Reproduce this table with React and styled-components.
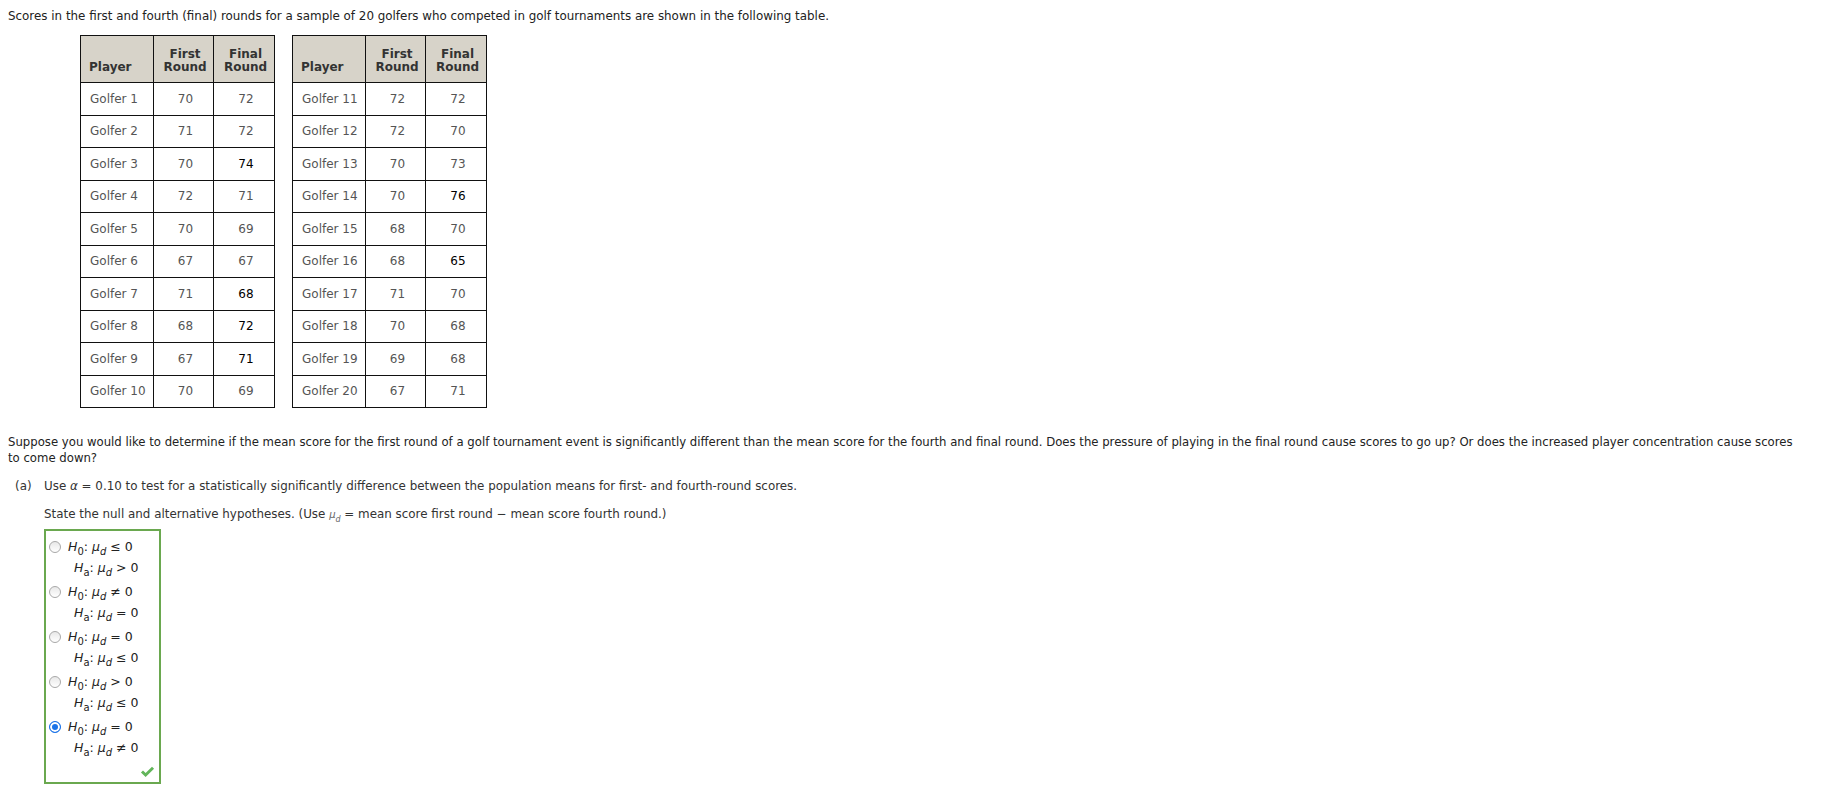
import React from 'react';
import styled, { createGlobalStyle } from 'styled-components';

const GlobalStyle = createGlobalStyle`
  body {
    margin: 0;
    background: #fff;
    font-family: "DejaVu Sans", Verdana, sans-serif;
    font-size: 11.9px;
    color: #222;
  }
`;

const leftRows = [
  ['Golfer 1', 70, 72],
  ['Golfer 2', 71, 72],
  ['Golfer 3', 70, 74, true],
  ['Golfer 4', 72, 71],
  ['Golfer 5', 70, 69],
  ['Golfer 6', 67, 67],
  ['Golfer 7', 71, 68, true],
  ['Golfer 8', 68, 72, true],
  ['Golfer 9', 67, 71, true],
  ['Golfer 10', 70, 69],
];

const rightRows = [
  ['Golfer 11', 72, 72],
  ['Golfer 12', 72, 70],
  ['Golfer 13', 70, 73],
  ['Golfer 14', 70, 76, true],
  ['Golfer 15', 68, 70],
  ['Golfer 16', 68, 65, true],
  ['Golfer 17', 71, 70],
  ['Golfer 18', 70, 68],
  ['Golfer 19', 69, 68],
  ['Golfer 20', 67, 71],
];

const options = [
  ['≤ 0', '> 0'],
  ['≠ 0', '= 0'],
  ['= 0', '≤ 0'],
  ['> 0', '≤ 0'],
  ['= 0', '≠ 0'],
];

function ScoreTable({ rows }) {
  return (
    <Table>
      <colgroup>
        <col style={{ width: 73 }} />
        <col style={{ width: 60 }} />
        <col style={{ width: 61 }} />
      </colgroup>
      <thead>
        <tr>
          <Th align="left">Player</Th>
          <Th>First<br />Round</Th>
          <Th>Final<br />Round</Th>
        </tr>
      </thead>
      <tbody>
        {rows.map(([name, first, final, dark]) => (
          <tr key={name}>
            <Td align="left">{name}</Td>
            <Td>{first}</Td>
            <Td $dark={dark}>{final}</Td>
          </tr>
        ))}
      </tbody>
    </Table>
  );
}

function Hyp({ sub, rel }) {
  return (
    <HypLine $indent={sub === 'a'}>
      <Ital>H</Ital><Sub>{sub}</Sub>: <Ital>μ</Ital><Sub $italic>d</Sub> {rel}
    </HypLine>
  );
}

export default function App() {
  return (
    <Page>
      <GlobalStyle />
      <Text>
        Scores in the first and fourth (final) rounds for a sample of 20 golfers who competed in golf tournaments are shown in the following table.
      </Text>

      <Tables>
        <ScoreTable rows={leftRows} />
        <ScoreTable rows={rightRows} />
      </Tables>

      <Question>
        Suppose you would like to determine if the mean score for the first round of a golf tournament event is significantly different than the mean score for the fourth and final round. Does the pressure of playing in the final round cause scores to go up? Or does the increased player concentration cause scores to come down?
      </Question>

      <Part>
        <PartLabel>(a)</PartLabel>
        <PartBody>
          <Text>
            Use <Ital>α</Ital> = 0.10 to test for a statistically significantly difference between the population means for first- and fourth-round scores.
          </Text>
          <Prompt>
            State the null and alternative hypotheses. (Use <SmallMu>μ<Sub $italic>d</Sub></SmallMu> = mean score first round − mean score fourth round.)
          </Prompt>

          <AnswerBox>
            {options.map(([h0, ha], i) => (
              <Option key={i}>
                <Radio $checked={i === 4} />
                <div>
                  <Hyp sub="0" rel={h0} />
                  <Hyp sub="a" rel={ha} />
                </div>
              </Option>
            ))}
            <Check viewBox="0 0 16 12">
              <path d="M1 6.5 L3.2 4.3 L6 7 L12.8 0.4 L15 2.6 L6 11.4 Z" fill="#62b55a" />
            </Check>
          </AnswerBox>
        </PartBody>
      </Part>
    </Page>
  );
}

const Page = styled.div`
  padding: 8px;
`;

const Text = styled.p`
  margin: 0;
  line-height: 16px;
`;

const Tables = styled.div`
  display: flex;
  gap: 17px;
  margin: 11px 0 0 72px;
`;

const Table = styled.table`
  border-collapse: collapse;
  table-layout: fixed;
  border: 1.5px solid #111;
  font-size: 12px;
`;

const Th = styled.th`
  background: #d7d3c9;
  color: #333;
  font-weight: bold;
  line-height: 13px;
  height: 38px;
  padding: 0 5px 8px 8px;
  vertical-align: bottom;
  text-align: ${(p) => p.align || 'center'};
  border: 1.5px solid #111;
`;

const Td = styled.td`
  height: 31.5px;
  padding: 0 5px 0 9px;
  color: ${(p) => (p.$dark ? '#000' : '#555')};
  text-align: ${(p) => p.align || 'center'};
  border: 1.5px solid #111;
`;

const Question = styled(Text)`
  margin-top: 26px;
  padding-right: 16px;
  font-size: 11.7px;
`;

const Part = styled.div`
  display: flex;
  margin-top: 12px;
`;

const PartLabel = styled.div`
  width: 29px;
  padding-left: 7px;
  line-height: 16px;
  color: #333;
`;

const PartBody = styled.div`
  display: flex;
  flex-direction: column;
  color: #333;
`;

const Prompt = styled(Text)`
  margin-top: 12px;
`;

const Ital = styled.i`
  font-style: italic;
`;

const SmallMu = styled.span`
  font-style: italic;
  font-size: 10px;
  color: #666;
`;

const Sub = styled.sub`
  font-size: 80%;
  font-style: ${(p) => (p.$italic ? 'italic' : 'normal')};
  vertical-align: -4px;
  line-height: 0;
`;

const AnswerBox = styled.div`
  position: relative;
  width: 110px;
  height: 246px;
  margin-top: 6px;
  border: 2px solid #6aa84f;
  padding: 5px 0 0 3px;
  box-sizing: content-box;
  display: flex;
  flex-direction: column;
  gap: 3px;
`;

const Option = styled.div`
  display: flex;
  align-items: flex-start;
  gap: 7px;
`;

const Radio = styled.span`
  flex: none;
  width: 10px;
  height: 10px;
  margin-top: 5px;
  border-radius: 50%;
  border: 1px solid ${(p) => (p.$checked ? '#1a73e8' : '#a8a8a8')};
  background: ${(p) => (p.$checked ? '#1a73e8' : 'linear-gradient(#e8e8e8, #fff)')};
  box-shadow: ${(p) => (p.$checked ? 'inset 0 0 0 2px #fff' : 'none')};
`;

const HypLine = styled.div`
  font-size: 12.5px;
  line-height: 21px;
  height: 21px;
  white-space: nowrap;
  color: #222;
  padding-left: ${(p) => (p.$indent ? '6px' : '0')};
`;

const Check = styled.svg`
  position: absolute;
  right: 4px;
  bottom: 4px;
  width: 15px;
  height: 12px;
`;
